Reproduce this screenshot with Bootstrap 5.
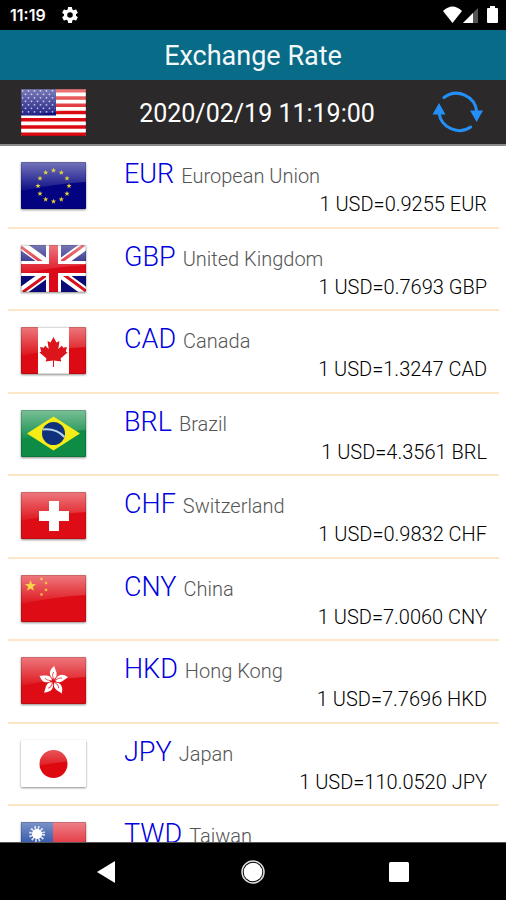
<!DOCTYPE html>
<html lang="en">
<head>
<meta charset="utf-8">
<meta name="viewport" content="width=device-width, initial-scale=1">
<title>Exchange Rate</title>
<link href="https://cdn.jsdelivr.net/npm/bootstrap@5.3.0/dist/css/bootstrap.min.css" rel="stylesheet">
<style>
  body { font-family: Roboto, sans-serif; background: #fff; }
  .status-bar { height: 30px; background: #000; color: #fff; padding: 0 7px 0 10px; }
  .clock { font: 600 16px/32px Inter, sans-serif; }
  .title-bar { background: #086b87; height: 50px; color: #f4f8fa; }
  .title-bar h1 { font-size: 27px; line-height: 53px; font-weight: 400; }
  .base-bar { background: #2b2929; height: 66px; padding: 0 22px 0 21px; border-bottom: 2px solid #8b8989; color: #fff; }
  .stamp { font-size: 25px; line-height: 32px; padding: 4px 4px 0 0; }
  .sync { color: #2490f5; line-height: 0; }
  .flag { width: 65px; height: 47px; flex: none; display: block; border-radius: 1px; }
  .rates .flag { filter: drop-shadow(0 1px 1px rgba(0, 0, 0, .45)); }
  .rates { padding: 0 7px 0 8px; }
  .rate-row { height: 82px; padding: 16px 12px 0 13px; border-bottom: 2px solid #fde6c6; }
  .rate-row:nth-child(odd) { height: 83px; }
  .rate-text { margin-left: 38px; }
  .code { font-size: 27px; line-height: 28px; font-weight: 300; color: #0000e0; margin-top: -2px; }
  .country { font-size: 20px; font-weight: 300; color: #555; margin-left: 7px; }
  .value { font-size: 20px; line-height: 24px; font-weight: 300; color: #000; text-align: right; margin-top: 2px; }
  .nav-keys { height: 58px; background: #000; border-top: 1px solid #555; }
  .nav-keys button { width: 146px; line-height: 0; }
</style>
</head>
<body>
<svg width="0" height="0" class="position-absolute" aria-hidden="true">
  <defs>
    <linearGradient id="shine" x1="0" y1="0" x2="0" y2="1">
      <stop offset="0" stop-color="#fff" stop-opacity=".45"/>
      <stop offset="1" stop-color="#fff" stop-opacity=".04"/>
    </linearGradient>
    <g id="gloss">
      <path d="M0 0H65V20Q32 22 0 29Z" fill="url(#shine)"/>
      <rect x=".5" y=".5" width="64" height="46" fill="none" stroke="#000" stroke-opacity=".14"/>
    </g>
    <path id="star" d="M0-10 2.4-3.2 9.5-3.1 3.8 1.2 5.9 8.1 0 4-5.9 8.1-3.8 1.2-9.5-3.1-2.4-3.2Z"/>
    <pattern id="stars" width="6" height="7" patternUnits="userSpaceOnUse">
      <circle cx="1.5" cy="1.8" r=".9" fill="#b4b8e6"/><circle cx="4.5" cy="5.3" r=".9" fill="#b4b8e6"/>
    </pattern>
    <path id="petal" d="M0-2C-5-5-5-11 1-15 1-12 4-9 3-5 2-3 1-2 0-2Z"/>
  </defs>
</svg>

<div class="d-flex flex-column vh-100 overflow-hidden">
  <div class="status-bar d-flex align-items-center flex-shrink-0">
    <span class="clock">11:19</span>
    <svg class="ms-3" width="16" height="16" viewBox="2 2 20 20" fill="#fff" role="img" aria-label="Settings"><path d="M19.43 12.98c.04-.32.07-.64.07-.98s-.03-.66-.07-.98l2.11-1.65c.19-.15.24-.42.12-.64l-2-3.46c-.12-.22-.39-.3-.61-.22l-2.49 1c-.52-.4-1.08-.73-1.69-.98l-.38-2.65A.49.49 0 0 0 14 2h-4c-.25 0-.46.18-.49.42l-.38 2.65c-.61.25-1.17.59-1.69.98l-2.49-1c-.23-.09-.49 0-.61.22l-2 3.46c-.13.22-.07.49.12.64l2.11 1.65c-.04.32-.07.65-.07.98s.03.66.07.98l-2.11 1.65c-.19.15-.24.42-.12.64l2 3.46c.12.22.39.3.61.22l2.49-1c.52.4 1.08.73 1.69.98l.38 2.65c.03.24.24.42.49.42h4c.25 0 .46-.18.49-.42l.38-2.65c.61-.25 1.17-.59 1.69-.98l2.49 1c.23.09.49 0 .61-.22l2-3.46c.12-.22.07-.49-.12-.64zM12 15.500a3.500 3.500 0 1 1 0-7 3.500 3.500 0 0 1 0 7z"/></svg>
    <svg class="ms-auto" width="56" height="18" viewBox="0 0 56 18" role="img" aria-label="Wi-Fi, signal and battery">
      <path d="M0 5Q9.500-4 19 5L9.500 17Z" fill="#fff"/>
      <path d="M20 17 35 2V17Z" fill="#555"/><path d="M20 17 30 7V17Z" fill="#fff"/>
      <path d="M45 2H47V0H52V2H54Q55 2 55 3V16Q55 17 54 17H45Q44 17 44 16V3Q44 2 45 2Z" fill="#fff"/>
    </svg>
  </div>

  <header class="flex-shrink-0">
    <div class="title-bar text-center"><h1 class="m-0">Exchange Rate</h1></div>
    <div class="base-bar d-flex align-items-center justify-content-between">
      <svg class="flag" viewBox="0 0 65 47" role="img" aria-label="United States">
        <path fill="#fff" d="M0 0H65V47H0Z"/>
        <path stroke="#db0a12" stroke-width="3.600" d="M0 1.800H65M0 9H65M0 16.300H65M0 23.500H65M0 30.700H65M0 38H65M0 45.200H65"/>
        <path fill="#10107c" d="M0 0H35V26.500H0Z"/><path fill="url(#stars)" d="M1 0H34V25H1Z"/>
        <use href="#gloss"/>
      </svg>
      <time class="stamp" datetime="2020-02-19T11:19:00">2020/02/19 11:19:00</time>
      <button type="button" class="sync btn p-0 border-0" aria-label="Refresh">
        <svg width="52" height="47" viewBox="0 0 52 47" fill="currentColor">
          <path d="M12 8.500A20.500 20.500 0 0 1 44.800 23M38.700 38A20.500 20.500 0 0 1 7 24" fill="none" stroke="currentColor" stroke-width="3" stroke-linecap="round"/>
          <path d="M38 21.500H51L44.700 33ZM.5 25.500H13.500L7 14Z"/>
        </svg>
      </button>
    </div>
  </header>

  <main class="flex-grow-1 overflow-hidden">
    <ul class="rates list-unstyled m-0">
      <li class="rate-row d-flex">
        <svg class="flag" viewBox="0 0 65 47" role="img" aria-label="European Union flag">
          <path fill="#030382" d="M0 0H65V47H0Z"/><use href="#gloss"/>
          <g fill="#e3d23c"><use href="#star" transform="translate(32.500 8.500) scale(.28)"/><use href="#star" transform="translate(40.300 10.600) scale(.28)"/><use href="#star" transform="translate(46 16.300) scale(.28)"/><use href="#star" transform="translate(48 24) scale(.28)"/><use href="#star" transform="translate(46 31.700) scale(.28)"/><use href="#star" transform="translate(40.300 37.400) scale(.28)"/><use href="#star" transform="translate(32.500 39.500) scale(.28)"/><use href="#star" transform="translate(24.700 37.400) scale(.28)"/><use href="#star" transform="translate(19 31.700) scale(.28)"/><use href="#star" transform="translate(17 24) scale(.28)"/><use href="#star" transform="translate(19 16.300) scale(.28)"/><use href="#star" transform="translate(24.700 10.600) scale(.28)"/></g>
        </svg>
        <div class="rate-text flex-grow-1"><div class="code">EUR<span class="country">European Union</span></div><div class="value">1 USD=0.9255 EUR</div></div>
      </li>
      <li class="rate-row d-flex">
        <svg class="flag" viewBox="0 0 65 47" role="img" aria-label="United Kingdom flag">
          <path fill="#0a0a78" d="M0 0H65V47H0Z"/>
          <path stroke="#fff" stroke-width="9" d="M0 0 65 47M65 0 0 47"/>
          <path stroke="#d8101c" stroke-width="3" d="M0 2 30 24M63 0 34 21M65 46 35 24M2 47 31 26"/>
          <path stroke="#fff" stroke-width="15" d="M32.500 0V47M0 23.500H65"/>
          <path stroke="#dc0a18" stroke-width="9" d="M32.500 0V47M0 23.500H65"/>
          <use href="#gloss"/>
        </svg>
        <div class="rate-text flex-grow-1"><div class="code">GBP<span class="country">United Kingdom</span></div><div class="value">1 USD=0.7693 GBP</div></div>
      </li>
      <li class="rate-row d-flex">
        <svg class="flag" viewBox="0 0 65 47" role="img" aria-label="Canada flag">
          <path fill="#fff" d="M0 0H65V47H0Z"/><path fill="#dc0a12" d="M0 0H17V47H0ZM48 0H65V47H48Z"/>
          <use href="#gloss"/>
          <path fill="#dc141c" d="M32.500 10 35.500 15.500 38.500 14 37.300 22 41 18.500 42 20.800 46 20 44.800 24.500 46.500 25.500 39.500 31.500 40.300 34.500 33 33.400V40H32V33.400L24.700 34.500 25.500 31.500 18.500 25.500 20.200 24.500 19 20 23 20.800 24 18.500 27.700 22 26.500 14 29.500 15.500Z"/>
        </svg>
        <div class="rate-text flex-grow-1"><div class="code">CAD<span class="country">Canada</span></div><div class="value">1 USD=1.3247 CAD</div></div>
      </li>
      <li class="rate-row d-flex">
        <svg class="flag" viewBox="0 0 65 47" role="img" aria-label="Brazil flag">
          <path fill="#0e8b45" d="M0 0H65V47H0Z"/><use href="#gloss"/>
          <path fill="#f6ec18" d="M6 23.500 32.500 6.500 59 23.500 32.500 40.500Z"/>
          <circle cx="32.500" cy="23.500" r="11.500" fill="#10327c"/>
          <path d="M22 19.500Q35 18 43.500 27" fill="none" stroke="#b9d3ea" stroke-width="2"/>
        </svg>
        <div class="rate-text flex-grow-1"><div class="code">BRL<span class="country">Brazil</span></div><div class="value">1 USD=4.3561 BRL</div></div>
      </li>
      <li class="rate-row d-flex">
        <svg class="flag" viewBox="0 0 65 47" role="img" aria-label="Switzerland flag">
          <path fill="#de0c14" d="M0 0H65V47H0Z"/><use href="#gloss"/>
          <path fill="#fff" d="M28 9H38V19H48V29H38V39H28V29H18V19H28Z"/>
        </svg>
        <div class="rate-text flex-grow-1"><div class="code">CHF<span class="country">Switzerland</span></div><div class="value">1 USD=0.9832 CHF</div></div>
      </li>
      <li class="rate-row d-flex">
        <svg class="flag" viewBox="0 0 65 47" role="img" aria-label="China flag">
          <path fill="#de0c14" d="M0 0H65V47H0Z"/><use href="#gloss"/>
          <g fill="#f8d648"><use href="#star" transform="translate(9.500 11) scale(.6)"/><use href="#star" transform="translate(20.500 4) rotate(20) scale(.2)"/><use href="#star" transform="translate(25 8) rotate(40) scale(.2)"/><use href="#star" transform="translate(25 15) scale(.2)"/><use href="#star" transform="translate(20.500 19.500) rotate(20) scale(.2)"/></g>
        </svg>
        <div class="rate-text flex-grow-1"><div class="code">CNY<span class="country">China</span></div><div class="value">1 USD=7.0060 CNY</div></div>
      </li>
      <li class="rate-row d-flex">
        <svg class="flag" viewBox="0 0 65 47" role="img" aria-label="Hong Kong flag">
          <path fill="#de0c14" d="M0 0H65V47H0Z"/><use href="#gloss"/>
          <g fill="#fff" transform="translate(32.500 24)"><use href="#petal"/><use href="#petal" transform="rotate(72)"/><use href="#petal" transform="rotate(144)"/><use href="#petal" transform="rotate(216)"/><use href="#petal" transform="rotate(288)"/></g>
          <g fill="none" stroke="#e4505a" stroke-width="1" transform="translate(32.500 24)"><path id="vein" d="M0-2Q-2-6 0-9"/><use href="#vein" transform="rotate(72)"/><use href="#vein" transform="rotate(144)"/><use href="#vein" transform="rotate(216)"/><use href="#vein" transform="rotate(288)"/></g>
        </svg>
        <div class="rate-text flex-grow-1"><div class="code">HKD<span class="country">Hong Kong</span></div><div class="value">1 USD=7.7696 HKD</div></div>
      </li>
      <li class="rate-row d-flex">
        <svg class="flag" viewBox="0 0 65 47" role="img" aria-label="Japan flag">
          <path fill="#fff" d="M0 0H65V47H0Z"/><circle cx="32.500" cy="24" r="14" fill="#de0810"/>
          <path d="M0 0H65V20Q32 22 0 29Z" fill="url(#shine)"/>
        </svg>
        <div class="rate-text flex-grow-1"><div class="code">JPY<span class="country">Japan</span></div><div class="value">1 USD=110.0520 JPY</div></div>
      </li>
      <li class="rate-row d-flex">
        <svg class="flag" viewBox="0 0 65 47" role="img" aria-label="Taiwan flag">
          <path fill="#e01a26" d="M0 0H65V47H0Z"/><path fill="#123c9c" d="M0 0H32V24H0Z"/><use href="#gloss"/>
          <circle cx="16" cy="12" r="6" fill="none" stroke="#fff" stroke-opacity=".8" stroke-width="4" stroke-dasharray="1.500 1.640"/><circle cx="16" cy="12" r="5" fill="#fff"/>
        </svg>
        <div class="rate-text flex-grow-1"><div class="code">TWD<span class="country">Taiwan</span></div></div>
      </li>
    </ul>
  </main>

  <nav class="nav-keys d-flex justify-content-center align-items-center flex-shrink-0" aria-label="System">
    <button type="button" class="btn p-0 border-0" aria-label="Back"><svg width="20" height="22" viewBox="0 0 20 22"><path d="M0 11 18 0V22Z" fill="#fff"/></svg></button>
    <button type="button" class="btn p-0 border-0" aria-label="Home"><svg width="24" height="24" viewBox="0 0 24 24"><circle cx="12" cy="12" r="11" fill="none" stroke="#ddd" stroke-width="1.500"/><circle cx="12" cy="12" r="9.300" fill="#fff"/></svg></button>
    <button type="button" class="btn p-0 border-0" aria-label="Recent apps"><svg width="20" height="20" viewBox="0 0 20 20"><rect width="20" height="20" rx="1.500" fill="#fff"/></svg></button>
  </nav>
</div>
<script src="https://cdn.jsdelivr.net/npm/bootstrap@5.3.0/dist/js/bootstrap.bundle.min.js"></script>
</body>
</html>
